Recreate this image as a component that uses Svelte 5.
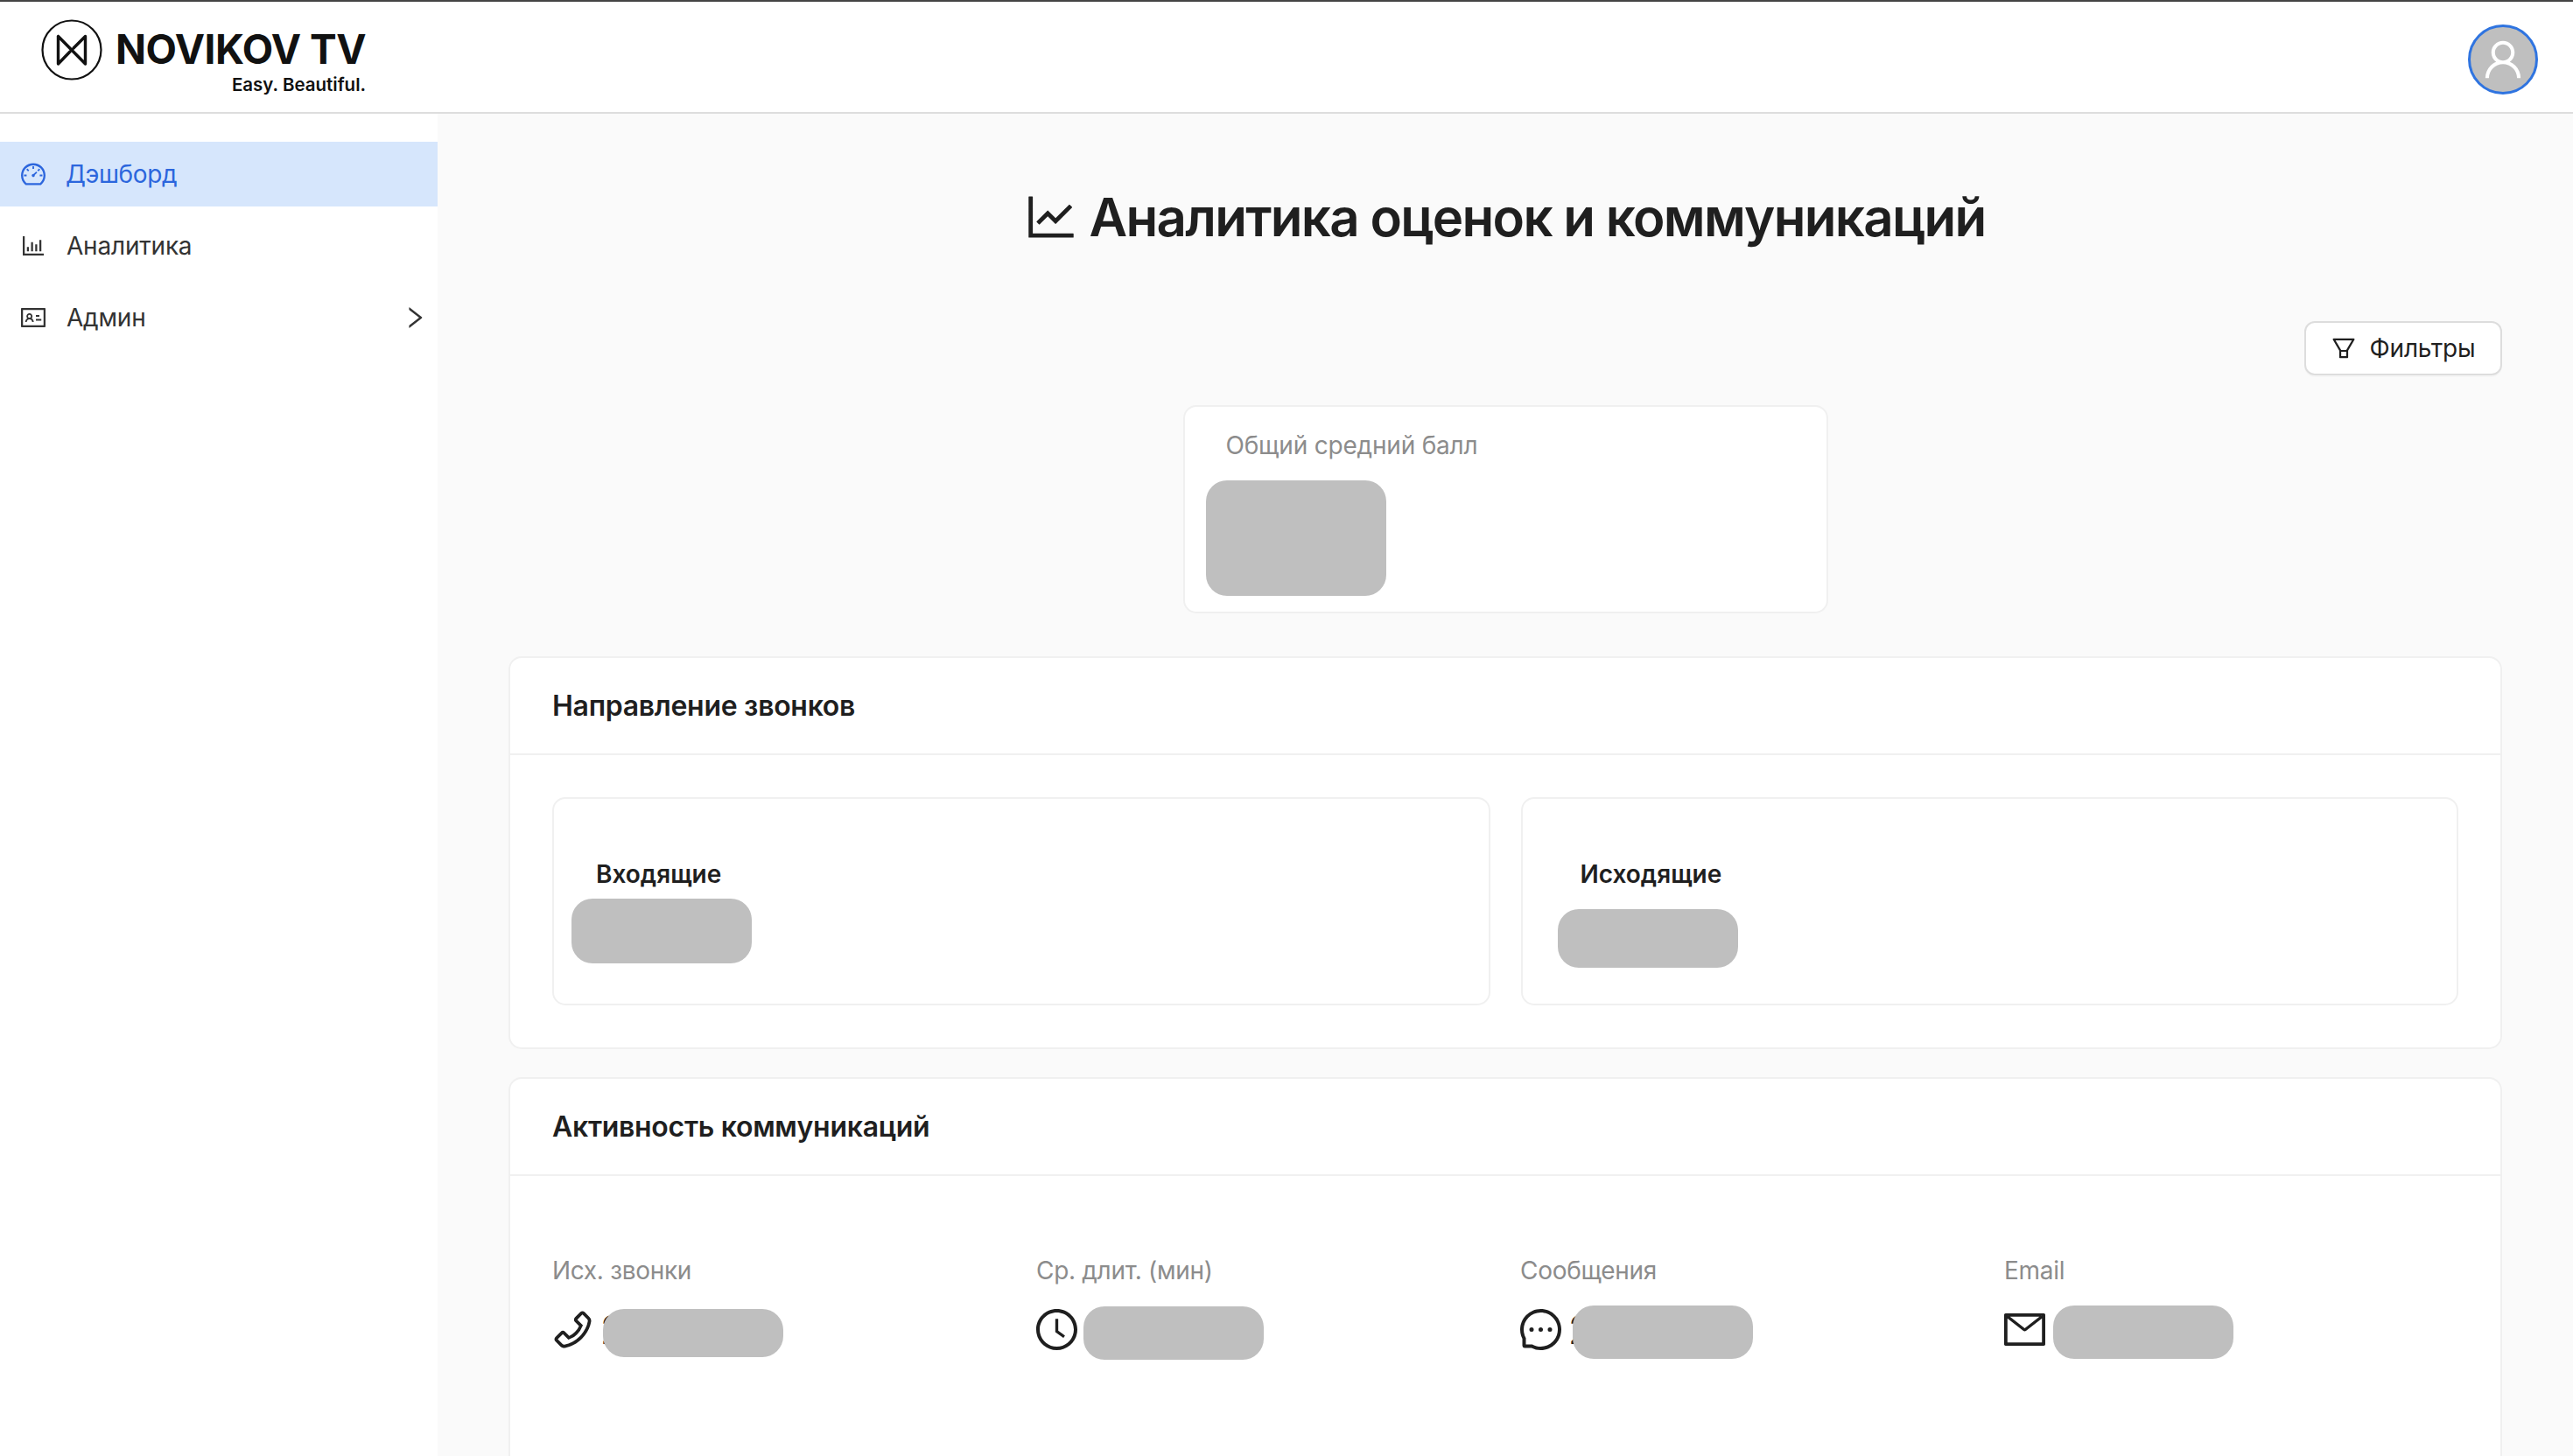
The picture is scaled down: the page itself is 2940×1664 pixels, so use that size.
<script lang="ts">
	// ant design outlined icons, viewBox 64 64 896 896
	const icons = {
		dashboard: 'M924.8 385.6a446.7 446.7 0 00-96-142.4 446.7 446.7 0 00-142.4-96C631.1 123.8 572.5 112 512 112s-119.1 11.8-174.4 35.2a446.7 446.7 0 00-142.4 96 446.7 446.7 0 00-96 142.4C75.8 440.9 64 499.5 64 560c0 132.7 58.3 257.7 159.9 343.1l1.7 1.4c5.8 4.8 13.1 7.5 20.6 7.5h531.7c7.5 0 14.8-2.7 20.6-7.5l1.7-1.4C901.7 817.7 960 692.7 960 560c0-60.5-11.9-119.1-35.2-174.4zM761.4 836H262.6A371.12 371.12 0 01140 560c0-99.4 38.7-192.8 109-263 70.3-70.3 163.7-109 263-109 99.4 0 192.8 38.7 263 109 70.3 70.3 109 163.7 109 263 0 105.6-44.5 205.5-122.6 276zM623.5 421.5a8.03 8.03 0 00-11.3 0L527.7 506c-18.7-5-39.4-.2-54.1 14.5a55.95 55.95 0 000 79.2 55.95 55.95 0 0079.2 0 55.87 55.87 0 0014.5-54.1l84.5-84.5c3.1-3.1 3.1-8.2 0-11.3l-28.3-28.3zM490 320h44c4.4 0 8-3.6 8-8v-80c0-4.4-3.6-8-8-8h-44c-4.4 0-8 3.6-8 8v80c0 4.4 3.6 8 8 8zm260 218v44c0 4.4 3.6 8 8 8h80c4.4 0 8-3.6 8-8v-44c0-4.4-3.6-8-8-8h-80c-4.4 0-8 3.6-8 8zm12.7-197.2l-31.1-31.1a8.03 8.03 0 00-11.3 0l-56.6 56.6a8.03 8.03 0 000 11.3l31.1 31.1c3.1 3.1 8.2 3.1 11.3 0l56.6-56.6c3.1-3.1 3.1-8.2 0-11.3zm-458.6-31.1a8.03 8.03 0 00-11.3 0l-31.1 31.1a8.03 8.03 0 000 11.3l56.6 56.6c3.1 3.1 8.2 3.1 11.3 0l31.1-31.1c3.1-3.1 3.1-8.2 0-11.3l-56.6-56.6zM262 530h-80c-4.4 0-8 3.6-8 8v44c0 4.4 3.6 8 8 8h80c4.4 0 8-3.6 8-8v-44c0-4.4-3.6-8-8-8z',
		bars: 'M888 792H200V168c0-4.4-3.6-8-8-8h-56c-4.4 0-8 3.6-8 8v688c0 4.4 3.6 8 8 8h752c4.4 0 8-3.6 8-8v-56c0-4.4-3.6-8-8-8zm-600-80h56c4.4 0 8-3.6 8-8V560c0-4.4-3.6-8-8-8h-56c-4.4 0-8 3.6-8 8v144c0 4.4 3.6 8 8 8zm152 0h56c4.4 0 8-3.6 8-8V384c0-4.4-3.6-8-8-8h-56c-4.4 0-8 3.6-8 8v320c0 4.4 3.6 8 8 8zm152 0h56c4.4 0 8-3.6 8-8V462c0-4.4-3.6-8-8-8h-56c-4.4 0-8 3.6-8 8v242c0 4.4 3.6 8 8 8zm152 0h56c4.4 0 8-3.6 8-8V304c0-4.4-3.6-8-8-8h-56c-4.4 0-8 3.6-8 8v400c0 4.4 3.6 8 8 8z',
		idcard: 'M928 160H96c-17.7 0-32 14.3-32 32v640c0 17.7 14.3 32 32 32h832c17.7 0 32-14.3 32-32V192c0-17.7-14.3-32-32-32zm-40 632H136V232h752v560zM610.3 476h123.4c1.3 0 2.3-3.6 2.3-8v-48c0-4.4-1-8-2.3-8H610.3c-1.3 0-2.3 3.6-2.3 8v48c0 4.4 1 8 2.3 8zm4.8 144h185.7c3.9 0 7.1-3.6 7.1-8v-48c0-4.4-3.2-8-7.1-8H615.1c-3.9 0-7.1 3.6-7.1 8v48c0 4.4 3.2 8 7.1 8zM224 673h43.9c4.2 0 7.6-3.3 7.9-7.5 3.8-50.5 46-90.5 97.2-90.5s93.4 40 97.2 90.5c.3 4.2 3.7 7.5 7.9 7.5H522a8 8 0 008-8.4c-2.8-53.3-32-99.7-74.6-126.1a111.8 111.8 0 0029.1-75.5c0-61.9-49.9-112-111.4-112s-111.4 50.1-111.4 112c0 29.1 11 55.5 29.1 75.5a158.09 158.09 0 00-74.6 126.1c-.4 4.6 3.2 8.4 7.8 8.4zm149-262c28.5 0 51.7 23.3 51.7 52s-23.2 52-51.7 52-51.7-23.3-51.7-52 23.2-52 51.7-52z',
		right: 'M765.7 486.8L314.9 134.7A7.97 7.97 0 00302 141v77.3c0 4.9 2.3 9.6 6.1 12.6l360 281.1-360 281.1c-3.9 3-6.1 7.7-6.1 12.6V883c0 6.7 7.7 10.4 12.9 6.3l450.8-352.1a31.96 31.96 0 000-50.4z',
		line: 'M888 792H200V168c0-4.4-3.6-8-8-8h-56c-4.4 0-8 3.6-8 8v688c0 4.4 3.6 8 8 8h752c4.4 0 8-3.6 8-8v-56c0-4.4-3.6-8-8-8zM305.8 637.7c3.1 3.1 8.1 3.1 11.3 0l138.3-137.6L583 628.5c3.1 3.1 8.2 3.1 11.3 0l275.4-275.3c3.1-3.1 3.1-8.2 0-11.3l-39.6-39.6a8.03 8.03 0 00-11.3 0l-230 229.9L461.4 404a8.03 8.03 0 00-11.3 0L266.3 586.7a8.03 8.03 0 000 11.3l39.5 39.7z',
		filter: 'M880.1 154H143.9c-24.5 0-39.8 26.7-27.5 48L349 597.4V838c0 17.7 14.2 32 31.8 32h262.4c17.6 0 31.8-14.3 31.8-32V597.4L907.7 202c12.2-21.3-3.1-48-27.6-48zM603 798H421V642h182v156zm9.6-236.6l-9.5 16.6h-182l-9.5-16.6L212.7 226h598.6L612.6 561.4z',
		user: 'M858.5 763.6a374 374 0 00-80.6-119.5 375.63 375.63 0 00-119.5-80.6c-.4-.2-.8-.3-1.2-.5C719.5 518 760 444.7 760 362c0-137-111-248-248-248S264 225 264 362c0 82.7 40.5 156 102.8 201.1-.4.2-.8.3-1.2.5-44.8 18.9-85 46-119.5 80.6a375.63 375.63 0 00-80.6 119.5A371.7 371.7 0 00136 901.8a8 8 0 008 8.2h60c4.4 0 7.9-3.5 8-7.8 2-77.2 33-149.5 87.8-204.3 56.7-56.7 132-87.9 212.2-87.9s155.5 31.2 212.2 87.9C779 752.7 810 825 812 902.2c.1 4.4 3.6 7.8 8 7.8h60a8 8 0 008-8.2c-1-47.8-10.9-94.3-29.5-138.2zM512 534c-45.9 0-89.1-17.9-121.6-50.4S340 407.9 340 362c0-45.9 17.9-89.1 50.4-121.6S466.1 190 512 190s89.1 17.9 121.6 50.4S684 316.1 684 362c0 45.9-17.9 89.1-50.4 121.6S557.9 534 512 534z',
		phone: 'M877.1 238.7L770.6 132.3c-13-13-30.4-20.3-48.8-20.3s-35.8 7.2-48.8 20.3L558.3 246.8c-13 13-20.3 30.5-20.3 48.9 0 18.5 7.2 35.8 20.3 48.9l89.6 89.7a405.46 405.46 0 01-86.4 127.3c-36.7 36.9-79.6 66-127.2 86.6l-89.6-89.7c-13-13-30.4-20.3-48.8-20.3a68.2 68.2 0 00-48.8 20.3L132.3 673c-13 13-20.3 30.5-20.3 48.9 0 18.5 7.2 35.8 20.3 48.9l106.4 106.4c22.2 22.2 52.8 34.9 84.2 34.9 6.5 0 12.8-.5 19.2-1.6 132.4-21.8 263.8-92.3 369.9-198.3C818 606 888.4 474.6 910.4 342.1c6.3-37.6-6.3-76.3-33.3-103.4zm-37.6 91.5c-19.5 117.9-82.9 235.5-178.4 331s-213 158.9-330.9 178.4c-14.8 2.5-30-2.5-40.8-13.2L184.9 721.9 295.7 611l119.8 120 .9.9 21.6-8a481.29 481.29 0 00285.7-285.8l8-21.6-120.8-120.7 110.8-110.9 104.5 104.5c10.8 10.8 15.8 26 13.3 40.8z',
		clock: 'M512 64C264.6 64 64 264.6 64 512s200.6 448 448 448 448-200.6 448-448S759.4 64 512 64zm0 820c-205.4 0-372-166.6-372-372s166.6-372 372-372 372 166.6 372 372-166.6 372-372 372zM686.7 638.6L544.1 535.5V288c0-4.4-3.6-8-8-8H488c-4.4 0-8 3.6-8 8v275.4c0 2.6 1.2 5 3.3 6.5l165.4 120.6c3.6 2.6 8.6 1.8 11.2-1.7l28.6-39c2.6-3.7 1.8-8.7-1.8-11.2z',
		message: 'M464 512a48 48 0 1096 0 48 48 0 10-96 0zm200 0a48 48 0 1096 0 48 48 0 10-96 0zm-400 0a48 48 0 1096 0 48 48 0 10-96 0zm661.2-173.6c-22.6-53.7-55-101.9-96.3-143.3a444.35 444.35 0 00-143.3-96.3C630.6 75.7 572.2 64 512 64h-2c-60.6.3-119.3 12.3-174.5 35.9a445.35 445.35 0 00-142 96.5c-40.9 41.3-73 89.3-95.2 142.8-23 55.4-34.6 114.3-34.3 174.9A449.4 449.4 0 00112 714v152a46 46 0 0046 46h152.1A449.4 449.4 0 00510 960h2.1c59.9 0 118-11.6 172.7-34.3a444.48 444.48 0 00142.8-95.2c41.3-40.9 73.8-88.7 96.5-142 23.6-55.2 35.6-113.9 35.9-174.5.3-60.9-11.5-120-34.8-175.6zm-151.1 438C704 845.8 611 884 512 884h-1.7c-60.3-.3-120.2-15.3-173.1-43.5l-8.4-4.5H188V695.2l-4.5-8.4C155.3 633.9 140.3 574 140 513.7c-.4-99.7 37.7-193.3 107.6-263.8 69.8-70.5 163.1-109.5 262.8-109.9h1.7c50 0 98.5 9.7 144.2 28.9 44.6 18.7 84.6 45.6 119 80 34.3 34.3 61.3 74.4 80 119 19.4 46.2 29.1 95.2 28.9 145.8-.6 99.6-39.7 192.9-110.1 262.7z',
		mail: 'M928 160H96c-17.7 0-32 14.3-32 32v640c0 17.7 14.3 32 32 32h832c17.7 0 32-14.3 32-32V192c0-17.7-14.3-32-32-32zm-40 110.8V792H136V270.8l-27.6-21.5 39.3-50.5 42.8 33.3h643.1l42.8-33.3 39.3 50.5-27.7 21.5zM833.6 232L512 482 190.4 232l-42.8-33.3-39.3 50.5 27.6 21.5 341.6 265.6a55.99 55.99 0 0068.7 0L888 270.8l27.6-21.5-39.3-50.5-42.7 33.2z'
	};

	const menu = [
		{ label: 'Дэшборд', icon: icons.dashboard, active: true },
		{ label: 'Аналитика', icon: icons.bars },
		{ label: 'Админ', icon: icons.idcard, arrow: true }
	];

	const metrics = [
		{ key: 'calls', label: 'Исх. звонки', icon: icons.phone },
		{ key: 'duration', label: 'Ср. длит. (мин)', icon: icons.clock },
		{ key: 'messages', label: 'Сообщения', icon: icons.message },
		{ key: 'email', label: 'Email', icon: icons.mail }
	];
</script>

<div class="page">
	<header class="topbar">
		<div class="logo">
			<svg class="logo-mark" viewBox="0 0 70 70" fill="none" stroke="#111">
				<circle cx="35" cy="35" r="33.5" stroke-width="2.2" />
				<path
					d="M19.5 19.5V51L33 37M50.5 51V19.5L37 33M19.5 19.5L50.5 51"
					stroke-width="3.4"
					stroke-linejoin="round"
					stroke-linecap="round"
				/>
			</svg>
			<div class="logo-text">
				<span class="logo-name">NOVIKOV TV</span>
				<span class="logo-tag">Easy. Beautiful.</span>
			</div>
		</div>
		<div class="avatar">
			<svg class="ico" viewBox="64 64 896 896"><path d={icons.user} /></svg>
		</div>
	</header>

	<div class="body">
		<aside class="sidebar">
			{#each menu as item}
				<div class="menu-item" class:active={item.active}>
					<svg class="ico" viewBox="64 64 896 896"><path d={item.icon} /></svg>
					<span class="menu-label">{item.label}</span>
					{#if item.arrow}
						<svg class="ico chevron" viewBox="64 64 896 896"><path d={icons.right} /></svg>
					{/if}
				</div>
			{/each}
		</aside>

		<main class="content">
			<h1 class="title">
				<svg class="ico" viewBox="64 64 896 896"><path d={icons.line} /></svg>
				Аналитика оценок и коммуникаций
			</h1>

			<div class="toolbar">
				<button class="filter-btn">
					<svg class="ico" viewBox="64 64 896 896"><path d={icons.filter} /></svg>
					Фильтры
				</button>
			</div>

			<div class="score-card">
				<div class="score-label">Общий средний балл</div>
				<div class="mask score-mask"></div>
			</div>

			<section class="card first">
				<h2 class="card-head">Направление звонков</h2>
				<div class="card-body directions">
					<div class="direction">
						<div class="direction-label">Входящие</div>
						<div class="mask in-mask"></div>
					</div>
					<div class="direction outgoing">
						<div class="direction-label">Исходящие</div>
						<div class="mask out-mask"></div>
					</div>
				</div>
			</section>

			<section class="card">
				<h2 class="card-head">Активность коммуникаций</h2>
				<div class="card-body metrics">
					{#each metrics as m}
						<div class="metric">
							<div class="metric-label">{m.label}</div>
							<div class="metric-value">
								<svg class="ico" viewBox="64 64 896 896"><path d={m.icon} /></svg>
								<span class="num">2</span>
								<div class="mask cover {m.key}"></div>
							</div>
						</div>
					{/each}
				</div>
			</section>
		</main>
	</div>
</div>

<style>
	:global(body) {
		margin: 0;
		font-family: Inter, 'Noto Sans', sans-serif;
		background: #fafafa;
		color: #1f1f1f;
	}

	.page {
		height: 1664px;
		display: flex;
		flex-direction: column;
		overflow: hidden;
	}

	.ico {
		width: 1em;
		height: 1em;
		flex: none;
		fill: currentColor;
	}

	.topbar {
		height: 130px;
		flex: none;
		box-sizing: border-box;
		display: flex;
		justify-content: space-between;
		align-items: flex-start;
		padding: 20px 40px 0 47px;
		background: #fff;
		border-top: 2px solid #444;
		border-bottom: 2px solid #ddd;
	}

	.logo {
		display: flex;
		gap: 15px;
	}

	.logo-mark {
		width: 70px;
		height: 70px;
		flex: none;
	}

	.logo-text {
		display: flex;
		flex-direction: column;
		align-items: flex-end;
		color: #111;
	}

	.logo-name {
		font-size: 46px;
		line-height: 52px;
		margin-top: 8px;
		font-weight: 700;
		letter-spacing: -0.5px;
		white-space: nowrap;
	}

	.logo-tag {
		font-size: 20.5px;
		line-height: 24px;
		margin-top: 3px;
		font-weight: 600;
	}

	.avatar {
		width: 80px;
		height: 80px;
		margin-top: 6px;
		box-sizing: border-box;
		border: 3px solid #2f74e0;
		border-radius: 50%;
		background: #bfbfbf;
		color: #fff;
		font-size: 48px;
		display: flex;
		align-items: center;
		justify-content: center;
	}

	.body {
		flex: 1;
		display: flex;
		min-height: 0;
	}

	.sidebar {
		width: 500px;
		flex: none;
		box-sizing: border-box;
		padding-top: 32px;
		background: #fff;
		display: flex;
		flex-direction: column;
		gap: 8px;
	}

	.menu-item {
		height: 74px;
		display: flex;
		align-items: center;
		gap: 24px;
		padding: 0 12px 0 24px;
		font-size: 28px;
		letter-spacing: -0.2px;
		color: #333;
	}

	.menu-item.active {
		background: #d6e6fc;
		color: #2c66dd;
		gap: 23px;
		letter-spacing: -0.4px;
	}

	.menu-label {
		flex: 1;
	}

	.content {
		flex: 1;
		min-width: 0;
		padding: 80px 81px 0;
	}

	.title {
		margin: 0;
		display: flex;
		justify-content: center;
		align-items: center;
		gap: 13px;
		font-size: 60px;
		line-height: 76px;
		font-weight: 600;
		letter-spacing: -1.7px;
		color: #1f1f1f;
	}

	.toolbar {
		display: flex;
		justify-content: flex-end;
		margin-top: 81px;
	}

	.filter-btn {
		width: 226px;
		height: 62px;
		box-sizing: border-box;
		display: flex;
		align-items: center;
		justify-content: center;
		gap: 16px;
		font: inherit;
		font-size: 28px;
		letter-spacing: -0.2px;
		color: #1f1f1f;
		background: #fff;
		border: 2px solid #ddd;
		border-radius: 12px;
		box-shadow: 0 2px 0 rgba(0, 0, 0, 0.02);
	}

	.mask {
		background: #bfbfbf;
		border-radius: 24px;
		width: 206px;
	}

	.score-card {
		width: 737px;
		height: 238px;
		box-sizing: border-box;
		margin: 34px auto 0;
		padding: 24px 24px 0;
		background: #fff;
		border: 2px solid #f0f0f0;
		border-radius: 15px;
	}

	.score-label {
		padding-left: 23px;
		font-size: 28px;
		line-height: 40px;
		letter-spacing: -0.2px;
		color: #8c8c8c;
	}

	.score-mask {
		height: 132px;
		margin-top: 20px;
	}

	.card {
		margin-top: 32px;
		background: #fff;
		border: 2px solid #f0f0f0;
		border-radius: 15px;
	}

	.card.first {
		margin-top: 49px;
	}

	.card-head {
		margin: 0;
		height: 111px;
		box-sizing: border-box;
		display: flex;
		align-items: center;
		padding: 0 48px;
		font-size: 32px;
		font-weight: 600;
		letter-spacing: -0.3px;
		color: #1f1f1f;
		border-bottom: 2px solid #f0f0f0;
	}

	.card-body {
		padding: 48px;
	}

	.directions {
		display: grid;
		grid-template-columns: 1fr 1fr;
		gap: 35px;
	}

	.direction {
		height: 238px;
		box-sizing: border-box;
		padding: 68px 20px 0;
		border: 2px solid #f0f0f0;
		border-radius: 15px;
	}

	.direction.outgoing {
		padding-left: 40px;
	}

	.direction-label {
		padding-left: 28px;
		font-size: 28px;
		line-height: 36px;
		font-weight: 600;
		color: #1f1f1f;
	}

	.outgoing .direction-label {
		padding-left: 26px;
	}

	.in-mask {
		height: 74px;
		margin-top: 10px;
	}

	.out-mask {
		height: 67px;
		margin-top: 22px;
	}

	.metrics {
		display: grid;
		grid-template-columns: repeat(4, 553px);
		padding-top: 90px;
		padding-bottom: 240px;
	}

	.metric-label {
		font-size: 28px;
		line-height: 36px;
		letter-spacing: -0.3px;
		color: #8c8c8c;
	}

	.metric-value {
		position: relative;
		display: flex;
		align-items: center;
		gap: 8px;
		height: 47px;
		margin-top: 26px;
		font-size: 47px;
		color: #1f1f1f;
	}

	.num {
		font-size: 45px;
		line-height: 47px;
	}

	.cover {
		position: absolute;
	}

	.cover.calls {
		left: 58px;
		top: 0;
		height: 55px;
	}

	.cover.duration {
		left: 54px;
		top: -3px;
		height: 61px;
	}

	.cover.messages {
		left: 60px;
		top: -4px;
		height: 61px;
	}

	.cover.email {
		left: 56px;
		top: -4px;
		height: 61px;
	}
</style>
